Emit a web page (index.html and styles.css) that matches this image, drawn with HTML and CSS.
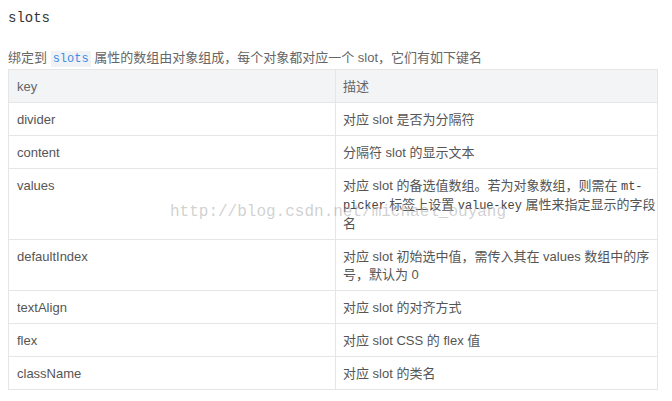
FILE: index.html
```html
<!DOCTYPE html>
<html lang="zh">
<head>
<meta charset="utf-8">
<link rel="stylesheet" href="styles.css">
</head>
<body>
<div class="page">
  <h3 class="title">slots</h3>
  <p class="intro">绑定到 <code class="hl">slots</code> 属性的数组由对象组成，每个对象都对应一个 slot，它们有如下键名</p>
  <table class="tbl">
    <thead>
      <tr><th class="c1">key</th><th>描述</th></tr>
    </thead>
    <tbody>
      <tr><td>divider</td><td>对应 slot 是否为分隔符</td></tr>
      <tr><td>content</td><td>分隔符 slot 的显示文本</td></tr>
      <tr><td>values</td><td>对应 slot 的备选值数组。若为对象数组，则需在 <code>mt-picker</code> 标签上设置 <code>value-key</code> 属性来指定显示的字段名</td></tr>
      <tr><td>defaultIndex</td><td>对应 slot 初始选中值，需传入其在 values 数组中的序号，默认为 0</td></tr>
      <tr><td>textAlign</td><td>对应 slot 的对齐方式</td></tr>
      <tr><td>flex</td><td>对应 slot CSS 的 flex 值</td></tr>
      <tr><td>className</td><td>对应 slot 的类名</td></tr>
    </tbody>
  </table>
  <div class="watermark">http://blog.csdn.net/michael_ouyang</div>
</div>
</body>
</html>
```
FILE: styles.css
```css
html, body { margin: 0; padding: 0; background: #fff; }
.page {
  position: relative;
  padding: 8px 8px 0 8px;
  font-family: "Liberation Sans", Arial, "Noto Sans CJK SC", sans-serif;
  color: #5e6d82;
}
.title {
  margin: 0;
  font-family: "Liberation Mono", monospace;
  font-weight: normal;
  font-size: 14px;
  line-height: 20px;
  color: #333;
}
.intro {
  margin: 20px 0 0 0;
  font-size: 13px;
  line-height: 20px;
  color: #666;
}
.hl {
  font-family: "Liberation Mono", monospace;
  font-size: 12px;
  color: #3a8ee6;
  background: #f0f2f5;
  padding: 1px 2px;
}
.tbl {
  width: 650px;
  border-collapse: collapse;
  font-size: 13px;
  line-height: 18px;
  color: #555;
}
.tbl th, .tbl td {
  border: 1px solid #e6e6e6;
  padding: 8px 0 6px 7px;
  text-align: left;
  vertical-align: top;
  font-weight: normal;
}
.tbl th { background: #f3f4f6; color: #666; }
.tbl .c1, .tbl td:first-child { width: 311px; padding-left: 8px; padding-right: 7px; }
.tbl code {
  font-family: "Liberation Mono", monospace;
  font-size: 12px;
  color: #444;
  letter-spacing: -0.1px;
}
.watermark {
  position: absolute;
  left: 170px;
  top: 203px;
  font-family: "Liberation Mono", monospace;
  font-size: 16px;
  color: rgba(170,170,170,0.55);
  pointer-events: none;
  white-space: nowrap;
}
```
